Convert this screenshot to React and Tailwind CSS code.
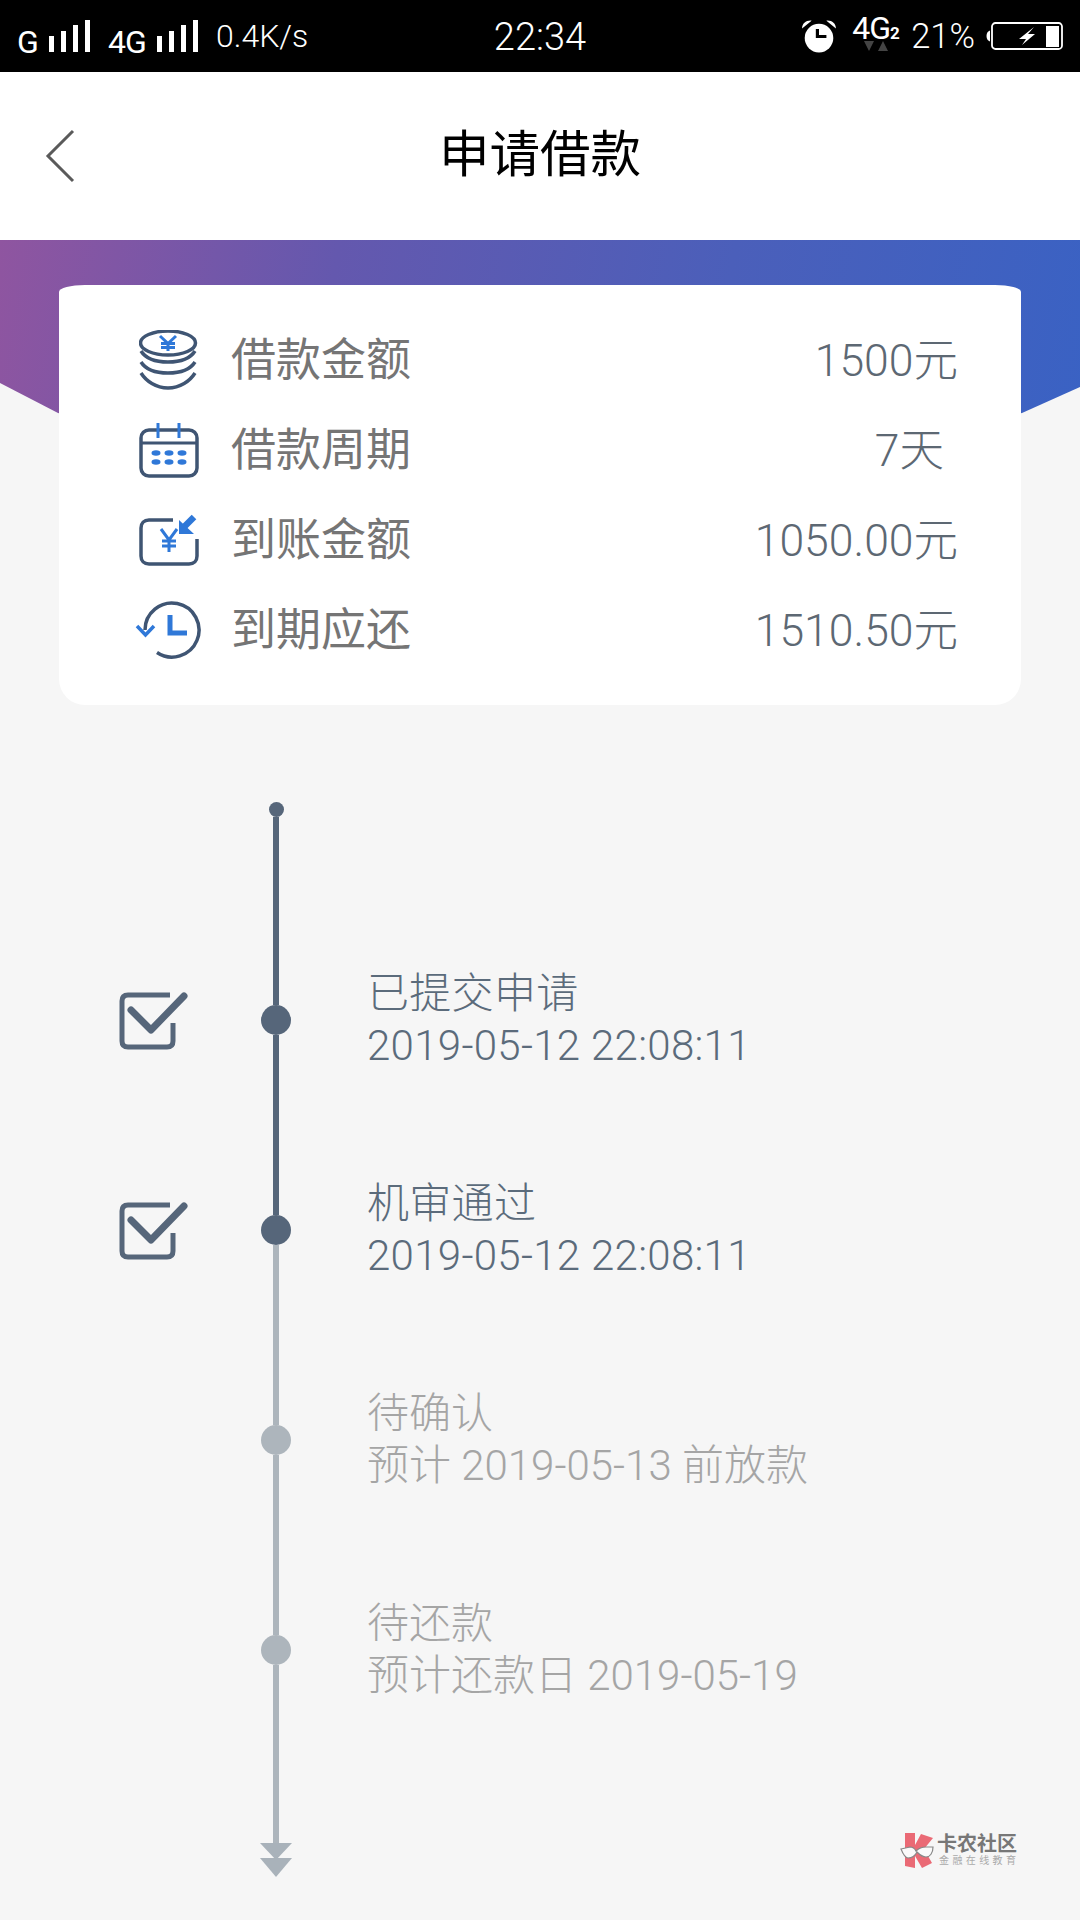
import React from "react";

const CJK = "font-['Roboto','Noto_Sans_CJK_SC',sans-serif]";

function Bars() {
  return (
    <svg width="42" height="32" viewBox="0 0 42 32" className="block" fill="#fff">
      <rect x="0" y="16" width="5" height="16" />
      <rect x="12" y="11" width="5" height="21" />
      <rect x="24" y="5" width="5" height="27" />
      <rect x="36" y="0" width="5" height="32" />
    </svg>
  );
}

function Alarm() {
  return (
    <svg width="36" height="34" viewBox="0 0 34 32" className="block">
      <circle cx="17" cy="18" r="13.5" fill="#fff" />
      <path d="M15.500 9.500V16.500H24" fill="none" stroke="#000" strokeWidth="3" />
      <path d="M1 9C1 4 5 1 10 1.500Z M33 9C33 4 29 1 24 1.500Z" fill="#fff" />
    </svg>
  );
}

function Battery() {
  return (
    <svg width="77" height="28" viewBox="0 0 77 28" className="block">
      <path d="M4 8.500V19.500C2 19 0.500 17 0.500 14S2 9 4 8.500Z" fill="#fff" />
      <rect x="6" y="1" width="70" height="26" rx="3.500" fill="none" stroke="#fff" strokeWidth="1.800" />
      <rect x="60" y="4" width="13" height="21" fill="#fff" />
      <path d="M48 5L33 17H40L36 23L49 12H42Z" fill="#fff" />
    </svg>
  );
}

function Coins() {
  return (
    <svg width="60" height="60" viewBox="0 0 60 60" className="block shrink-0" fill="none">
      <ellipse cx="29" cy="13" rx="27.500" ry="12" stroke="#3f5573" strokeWidth="3.500" />
      <path d="M2 21C7 29 17 32 29 32S51 29 56 21M2 32C7 40 17 43 29 43S51 40 56 32M2 43C7 51 17 58 29 58S51 51 56 43" stroke="#3f5573" strokeWidth="3.500" />
      <path d="M21 6L29 13.500L37 6M29 13.500V21M22 13.500H36M22 17.500H36" stroke="#2f78d8" strokeWidth="3" />
    </svg>
  );
}

function Calendar() {
  return (
    <svg width="60" height="56" viewBox="0 0 60 56" className="block shrink-0" fill="none">
      <rect x="2" y="8" width="56" height="46" rx="8" stroke="#3f5573" strokeWidth="3.500" />
      <path d="M2 21H58" stroke="#3f5573" strokeWidth="3" />
      <path d="M19 1V16M40 1V16" stroke="#2f78d8" strokeWidth="3" />
      <g fill="#2f78d8">
        <ellipse cx="17" cy="31" rx="4.500" ry="2.700" />
        <ellipse cx="30" cy="31" rx="4.500" ry="2.700" />
        <ellipse cx="43" cy="31" rx="4.500" ry="2.700" />
        <ellipse cx="17" cy="40" rx="4.500" ry="2.700" />
        <ellipse cx="30" cy="40" rx="4.500" ry="2.700" />
        <ellipse cx="43" cy="40" rx="4.500" ry="2.700" />
      </g>
    </svg>
  );
}

function Receive() {
  return (
    <svg width="60" height="52" viewBox="0 0 60 52" className="block shrink-0" fill="none">
      <path d="M34 6H10C5 6 2 9 2 14V42C2 47 5 50 10 50H50C55 50 58 47 58 42V25" stroke="#3f5573" strokeWidth="3.500" />
      <path d="M22 15L30 26L38 15M30 26V38M23 27H37M23 32H37" stroke="#2f78d8" strokeWidth="3" />
      <path d="M55 3L44 14" stroke="#2f78d8" strokeWidth="6.500" />
      <path d="M40 6V20H55Z" fill="#2f78d8" />
    </svg>
  );
}

function ClockBack() {
  return (
    <svg width="68" height="60" viewBox="0 0 68 60" className="block shrink-0" fill="none">
      <path d="M10 30A27 27 0 1 1 22 52.500" stroke="#3f5573" strokeWidth="3.500" />
      <path d="M2 26L10.500 35L19 26" stroke="#2f78d8" strokeWidth="3.500" />
      <path d="M35 15V33H52" stroke="#2f78d8" strokeWidth="5" />
    </svg>
  );
}

function Check() {
  return (
    <svg width="70" height="60" viewBox="0 0 70 60" className="block" fill="none">
      <path d="M52 5H10C6 5 4 7 4 11V51C4 55 6 57 10 57H49C53 57 55 55 55 51V33" stroke="#56667a" strokeWidth="5" />
      <path d="M13 20L33 40L66 6" stroke="#56667a" strokeWidth="7" strokeLinecap="round" strokeLinejoin="round" />
    </svg>
  );
}

function Row({ icon, label, value, extra }) {
  return (
    <div className="flex items-center h-[90px]">
      <div className="w-[60px] flex justify-center shrink-0">{icon}</div>
      <div className="ml-[32px] text-[45px] leading-none text-[#757575]">{label}</div>
      <div className={`ml-auto mt-[2px] text-[44.500px] leading-none font-light text-[#5d6873] ${extra}`}>{value}</div>
    </div>
  );
}

function Step({ active, check, line1, line2, topDark, bottomDark }) {
  return (
    <div className="flex h-[210px]">
      <div className="w-[261px] pl-[118px] flex items-center shrink-0">{check && <Check />}</div>
      <div className="w-[30px] flex flex-col items-center shrink-0">
        <div className={`w-[6px] flex-1 ${topDark ? "bg-[#56667a]" : "bg-[#adb5bc]"}`} />
        <div className={`w-[30px] h-[30px] rounded-full ${active ? "bg-[#56667a]" : "bg-[#adb5bc]"}`} />
        <div className={`w-[6px] flex-1 ${bottomDark ? "bg-[#56667a]" : "bg-[#adb5bc]"}`} />
      </div>
      <div className={`ml-[76px] flex flex-col justify-center text-[42px] leading-[52px] font-light ${active ? "tracking-[0.3px] text-[#5b6b7b]" : "text-[#a5a5a5]"}`}>
        <div>{line1}</div>
        <div>{line2}</div>
      </div>
    </div>
  );
}

export default function App() {
  return (
    <div className={`relative w-[1080px] h-[1920px] overflow-hidden bg-[#f6f6f6] ${CJK}`}>
      {/* status bar */}
      <div className="h-[72px] bg-black text-white grid grid-cols-3 items-center">
        <div className="flex items-center pl-[17px]">
          <span className="text-[32px] leading-none mt-[12px] w-[32px]">G</span>
          <Bars />
          <span className="ml-[17px] text-[32px] leading-none mt-[12px] w-[49px] tracking-[-1px]">4G</span>
          <Bars />
          <span className="ml-[17px] text-[32px] leading-none font-light">0.4K/s</span>
        </div>
        <div className="text-center text-[38px] leading-none font-light mt-[2px]">22:34</div>
        <div className="flex items-center justify-end pr-[17px]">
          <Alarm />
          <div className="relative ml-[15px] w-[50px] h-[38px] -mt-[10px]">
            <span className="text-[32px] leading-none tracking-[-1px]">4G</span>
            <span className="text-[17px] leading-none font-bold">2</span>
            <svg width="26" height="10" viewBox="0 0 26 10" className="absolute left-[12px] top-[29px]" fill="#444">
              <path d="M0 0H10L5 10Z M14 10H24L19 0Z" />
            </svg>
          </div>
          <span className="ml-[9px] text-[34.500px] leading-none font-light">21%</span>
          <div className="ml-[11px]"><Battery /></div>
        </div>
      </div>

      {/* header */}
      <div className="h-[168px] bg-white flex items-center justify-center relative">
        <svg width="30" height="54" viewBox="0 0 30 54" className="absolute left-[45px] top-[57px]" fill="none">
          <path d="M28 2L3 27L28 52" stroke="#5a5a5a" strokeWidth="3" />
        </svg>
        <div className="text-[50.500px] leading-none text-black -mt-[2px]">申请借款</div>
      </div>

      {/* banner + card */}
      <div className="relative pt-[45px]">
        <div className="absolute left-0 top-0 w-full h-[300px] bg-[linear-gradient(100deg,#8f55a0_0%,#6458ae_30%,#4b5fba_65%,#3962c4_100%)] [clip-path:polygon(0_0,100%_0,100%_147px,1022px_173px,540px_300px,58px_173px,0_143px)]" />
        <div className="relative mx-[59px] h-[420px] bg-white [border-radius:26px_26px_26px_26px/7px_7px_26px_26px] pt-[30px] pl-[80px] pr-[63px]">
          <Row icon={<Coins />} label="借款金额" value="1500元" />
          <Row icon={<Calendar />} label="借款周期" value="7天" extra="mr-[14px]" />
          <Row icon={<Receive />} label="到账金额" value="1050.00元" />
          <Row icon={<ClockBack />} label="到期应还" value="1510.50元" />
        </div>
      </div>

      {/* timeline */}
      <div className="mt-[97px]">
        <div className="ml-[261px] w-[30px] h-[113px] flex flex-col items-center">
          <div className="w-[15px] h-[15px] rounded-full bg-[#56667a] shrink-0" />
          <div className="w-[6px] flex-1 bg-[#56667a]" />
        </div>
        <Step active check topDark bottomDark line1="已提交申请" line2="2019-05-12 22:08:11" />
        <Step active check topDark line1="机审通过" line2="2019-05-12 22:08:11" />
        <Step line1="待确认" line2="预计 2019-05-13 前放款" />
        <Step line1="待还款" line2="预计还款日 2019-05-19" />
        <div className="ml-[261px] w-[30px] h-[122px] flex flex-col items-center">
          <div className="w-[6px] h-[90px] bg-[#adb5bc]" />
          <svg width="32" height="34" viewBox="0 0 32 34" className="block shrink-0" fill="#a9b2ba">
            <path d="M0 0H32L16 17Z" />
            <path d="M0 15H32L16 34Z" />
          </svg>
        </div>
      </div>

      {/* watermark */}
      <div className="absolute left-[900px] top-[1832px] flex">
        <svg width="35" height="37" viewBox="0 0 35 37" className="block shrink-0">
          <path d="M5 1H15V13L21 2L33 6L24 17L32 31L22 36L15 24V36L5 34Z" fill="#ea6a75" />
          <path d="M1 17L10 15C13 15 15 17 16 19C18 17 22 15 26 15L33 15C33 21 30 25 26 25C22 25 19 22 17 20C15 24 12 26 8 26C5 26 3 22 1 17Z" fill="#fafafa" stroke="#888" strokeWidth="1.200" />
        </svg>
        <div className="ml-[2px] font-['Noto_Sans_CJK_SC',sans-serif]">
          <div className="text-[20px] leading-[22px] font-bold text-[#777] whitespace-nowrap">卡农社区</div>
          <div className="ml-[2px] text-[10px] leading-[12px] tracking-[3.400px] text-[#aaa] whitespace-nowrap">金融在线教育</div>
        </div>
      </div>
    </div>
  );
}
